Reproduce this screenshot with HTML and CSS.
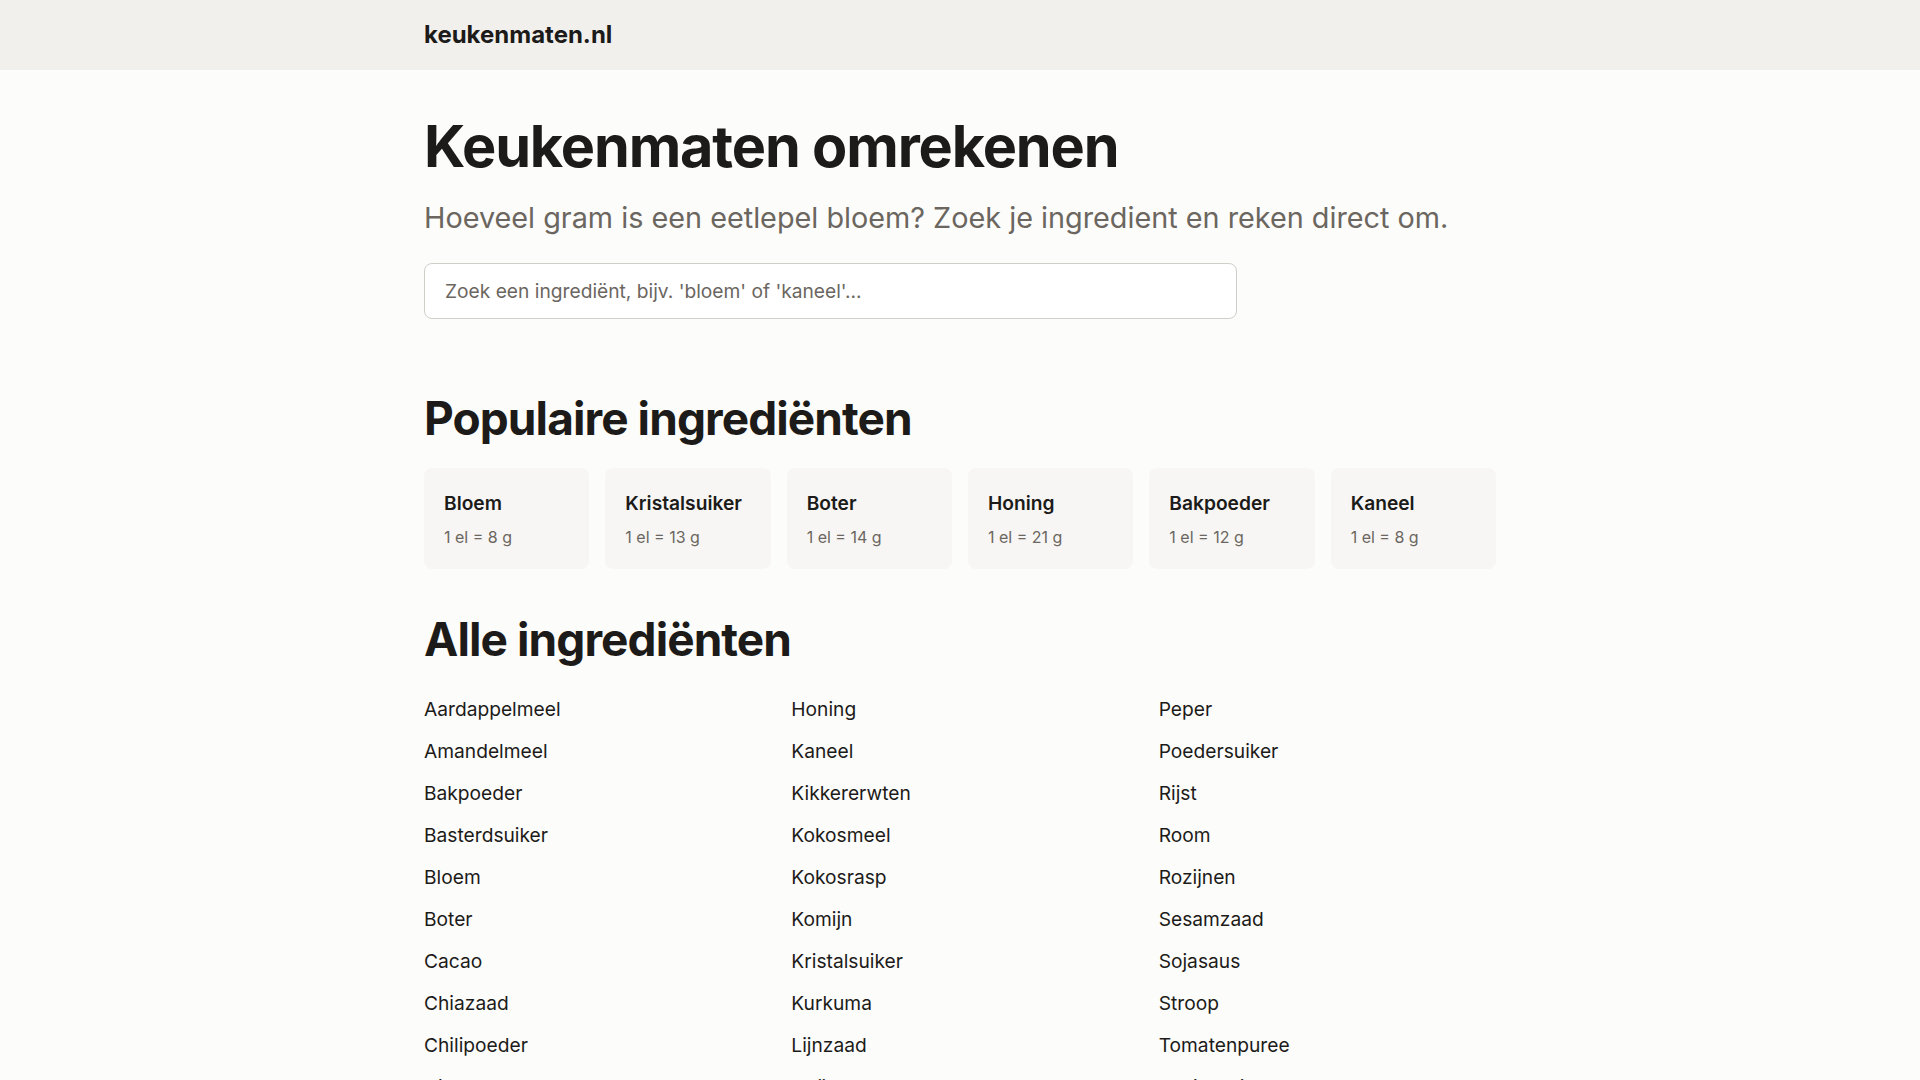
FILE: index.html
```html
<!DOCTYPE html>
<html lang="nl">
<head>
<meta charset="utf-8">
<title>Keukenmaten omrekenen</title>
<link rel="stylesheet" href="styles.css">
</head>
<body>
<header class="site-header">
  <div class="container header-inner">
    <a class="logo" href="#">keukenmaten.nl</a>
  </div>
</header>
<main class="container">
  <section class="hero">
    <h1 class="title">Keukenmaten omrekenen</h1>
    <p class="subtitle">Hoeveel gram is een eetlepel bloem? Zoek je ingredient en reken direct om.</p>
    <input class="search" type="text" placeholder="Zoek een ingrediënt, bijv. 'bloem' of 'kaneel'...">
  </section>

  <section class="popular">
    <h2 class="section-title">Populaire ingrediënten</h2>
    <div class="cards">
      <a class="card" href="#"><span class="card-name">Bloem</span><span class="card-value">1 el = 8 g</span></a>
      <a class="card" href="#"><span class="card-name">Kristalsuiker</span><span class="card-value">1 el = 13 g</span></a>
      <a class="card" href="#"><span class="card-name">Boter</span><span class="card-value">1 el = 14 g</span></a>
      <a class="card" href="#"><span class="card-name">Honing</span><span class="card-value">1 el = 21 g</span></a>
      <a class="card" href="#"><span class="card-name">Bakpoeder</span><span class="card-value">1 el = 12 g</span></a>
      <a class="card" href="#"><span class="card-name">Kaneel</span><span class="card-value">1 el = 8 g</span></a>
    </div>
  </section>

  <section class="all">
    <h2 class="section-title">Alle ingrediënten</h2>
    <ul class="ingredient-list">
      <li><a href="#">Aardappelmeel</a></li>
      <li><a href="#">Amandelmeel</a></li>
      <li><a href="#">Bakpoeder</a></li>
      <li><a href="#">Basterdsuiker</a></li>
      <li><a href="#">Bloem</a></li>
      <li><a href="#">Boter</a></li>
      <li><a href="#">Cacao</a></li>
      <li><a href="#">Chiazaad</a></li>
      <li><a href="#">Chilipoeder</a></li>
      <li><a href="#">Citroensap</a></li>
      <li><a href="#">Gember</a></li>
      <li><a href="#">Gist</a></li>
      <li><a href="#">Griesmeel</a></li>
      <li><a href="#">Havermout</a></li>
      <li><a href="#">Honing</a></li>
      <li><a href="#">Kaneel</a></li>
      <li><a href="#">Kikkererwten</a></li>
      <li><a href="#">Kokosmeel</a></li>
      <li><a href="#">Kokosrasp</a></li>
      <li><a href="#">Komijn</a></li>
      <li><a href="#">Kristalsuiker</a></li>
      <li><a href="#">Kurkuma</a></li>
      <li><a href="#">Lijnzaad</a></li>
      <li><a href="#">Maïzena</a></li>
      <li><a href="#">Melk</a></li>
      <li><a href="#">Mosterd</a></li>
      <li><a href="#">Nootmuskaat</a></li>
      <li><a href="#">Paprikapoeder</a></li>
      <li><a href="#">Peper</a></li>
      <li><a href="#">Poedersuiker</a></li>
      <li><a href="#">Rijst</a></li>
      <li><a href="#">Room</a></li>
      <li><a href="#">Rozijnen</a></li>
      <li><a href="#">Sesamzaad</a></li>
      <li><a href="#">Sojasaus</a></li>
      <li><a href="#">Stroop</a></li>
      <li><a href="#">Tomatenpuree</a></li>
      <li><a href="#">Vanillesuiker</a></li>
      <li><a href="#">Walnoten</a></li>
      <li><a href="#">Water</a></li>
      <li><a href="#">Yoghurt</a></li>
      <li><a href="#">Zout</a></li>
    </ul>
  </section>
</main>
</body>
</html>
```

FILE: styles.css
```css
* { box-sizing: border-box; }

html, body {
  margin: 0;
  padding: 0;
}

body {
  background: #fcfcfa;
  color: #1c1b19;
  font-family: Inter, "Noto Sans", "Liberation Sans", sans-serif;
}

a { color: inherit; text-decoration: none; }

.container {
  max-width: 1120px;
  margin: 0 auto;
  padding: 0 24px;
}

.site-header {
  background: #f1f0ed;
  height: 70px;
}

.header-inner {
  height: 100%;
  display: flex;
  align-items: center;
}

.logo {
  font-size: 24px;
  line-height: 1.2;
  font-weight: 700;
  color: #1c1b19;
}

.hero {
  padding-top: 45px;
}

.title {
  margin: 0;
  font-size: 57.6px;
  line-height: 1.1;
  font-weight: 700;
  letter-spacing: -0.02em;
}

.subtitle {
  margin: 20px 0 0;
  font-size: 28.8px;
  line-height: 1.4;
  color: #6b665f;
}

.search {
  display: block;
  margin-top: 24px;
  width: 813px;
  height: 56px;
  padding: 0 20px;
  border: 1px solid #d0cec8;
  border-radius: 8px;
  background: #ffffff;
  font-family: inherit;
  font-size: 19.2px;
  color: #1c1b19;
}

.search::placeholder { color: #6b665f; }

.popular { margin-top: 72px; }

.section-title {
  margin: 0;
  font-size: 46px;
  line-height: 1.2;
  font-weight: 700;
  letter-spacing: -0.02em;
}

.cards {
  margin-top: 22px;
  display: grid;
  grid-template-columns: repeat(6, 1fr);
  gap: 16px;
}

.card {
  display: flex;
  flex-direction: column;
  gap: 10px;
  background: #f7f6f4;
  border-radius: 8px;
  padding: 23px 20px 21px;
}

.card-name {
  font-size: 19.2px;
  line-height: 1.3;
  font-weight: 600;
  color: #1c1b19;
}

.card-value {
  font-size: 16px;
  line-height: 1.4;
  color: #6b665f;
}

.all { margin-top: 43px; }

.ingredient-list {
  list-style: none;
  margin: 21px 0 0;
  padding: 0;
  column-count: 3;
  column-gap: 30px;
}

.ingredient-list li {
  font-size: 19.2px;
  line-height: 1.2;
  padding: 9.5px 0;
  break-inside: avoid;
}
```
